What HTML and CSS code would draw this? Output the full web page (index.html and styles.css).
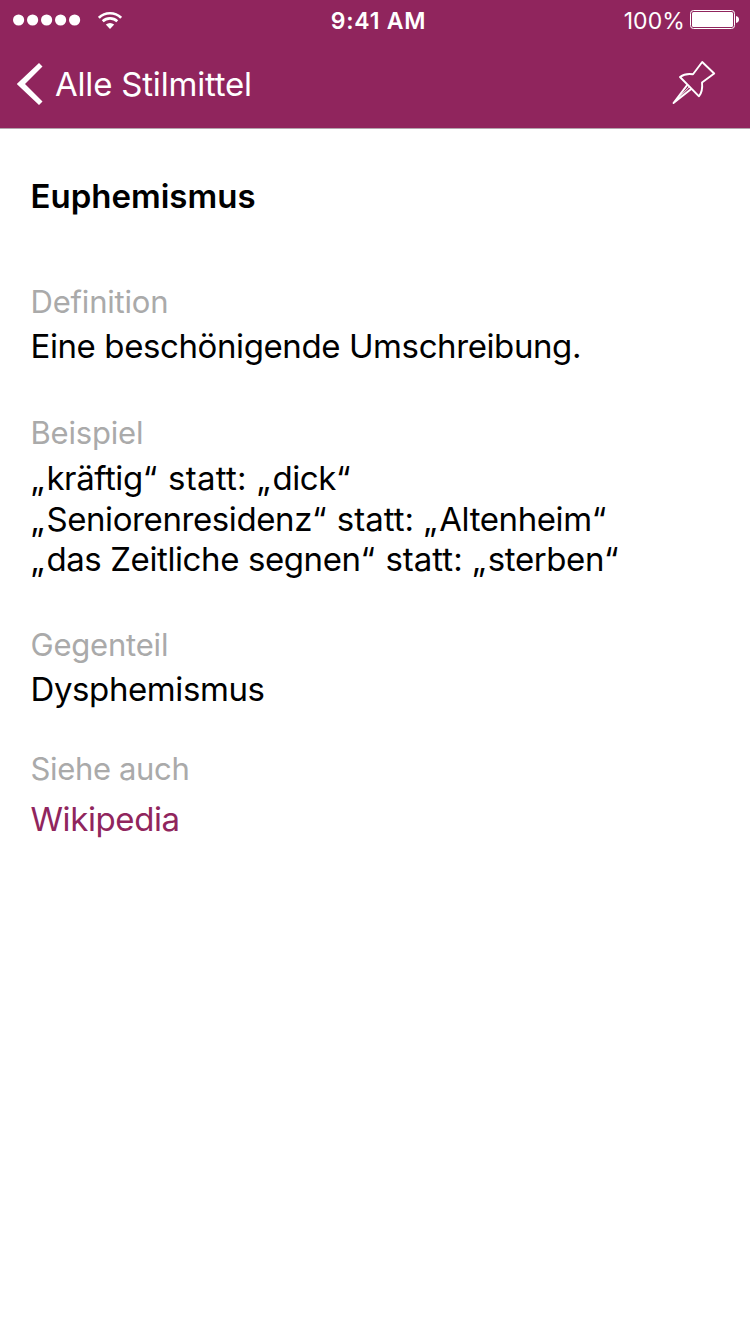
FILE: index.html
```html
<!DOCTYPE html>
<html lang="de">
<head>
<meta charset="utf-8">
<title>Euphemismus</title>
<link rel="stylesheet" href="styles.css">
</head>
<body>
<header class="header">
  <div class="status">
    <div class="signal">
      <svg class="dots" width="68" height="12" viewBox="0 0 68 12" fill="#fff"><circle cx="5.6" cy="6" r="5.6"/><circle cx="19.6" cy="6" r="5.6"/><circle cx="33.6" cy="6" r="5.6"/><circle cx="47.6" cy="6" r="5.6"/><circle cx="61.6" cy="6" r="5.6"/></svg>
      <svg class="wifi" width="24" height="18" viewBox="0 0 24 18" fill="none" stroke="#fff" stroke-width="2.6"><path d="M.9 6.8A15.700 15.700 0 0 1 23.100 6.800"/><path d="M4.700 10.300A10.600 10.600 0 0 1 19.300 10.300"/><path d="M7.800 13.600Q12 10.200 16.200 13.600L12 18z" fill="#fff" stroke="none"/></svg>
    </div>
    <span class="time">9:41 AM</span>
    <div class="power">
      <span class="percent">100%</span>
      <svg class="battery" width="49" height="20" viewBox="0 0 49 20"><rect x=".5" y=".5" width="44" height="18" rx="3" fill="none" stroke="#fff"/><rect x="2" y="2" width="41" height="15" rx="1.5" fill="#fff"/><path d="M46 6q3 .7 3 3.500t-3 3.500z" fill="#fff"/></svg>
    </div>
  </div>
  <nav class="nav">
    <a class="back"><svg width="26" height="42" viewBox="0 0 26 42" fill="#fff"><path d="M-.3 21L22 0l3.500 3.500L8 21l17.500 17.500L22 42z"/></svg><span class="back-label">Alle Stilmittel</span></a>
    <svg class="pin" width="44" height="44" viewBox="0 0 44 44" fill="none" stroke="#fff" stroke-width="1.900" stroke-linejoin="round"><path d="M30.200 2L42.200 13.500 30 22.500Q31 31 27 36.300L8 17Q13.500 13 21 14.300z"/><path d="M15.500 24.700L1.500 43l18-14.300"/><path d="M1.500 43l16-16.300" stroke-width="1"/></svg>
  </nav>
</header>
<main class="content">
  <h1 class="title">Euphemismus</h1>
  <section class="entry"><h2 class="label">Definition</h2><p class="text definition">Eine beschönigende Umschreibung.</p></section>
  <section class="entry sample"><h2 class="label">Beispiel</h2><p class="text example"><span class="line"><span class="open">„</span>kräftig<span class="close">“</span><span class="wide"> statt: </span><span class="open">„</span>dick<span class="close">“</span></span><span class="line"><span class="open">„</span>Seniorenresidenz<span class="close">“</span><span class="statt"> statt: </span><span class="open">„</span>Altenheim<span class="close">“</span></span><span class="line"><span class="open">„</span>das Zeitliche segnen<span class="close">“</span><span class="statt"> statt: </span><span class="open">„</span>sterben<span class="close">“</span></span></p></section>
  <section class="entry antonym"><h2 class="label">Gegenteil</h2><p class="text opposite">Dysphemismus</p></section>
  <section class="entry"><h2 class="label also">Siehe auch</h2><a class="text link">Wikipedia</a></section>
</main>
</body>
</html>
```
FILE: styles.css
```css
* { box-sizing: border-box; margin: 0; padding: 0; }
body { width: 750px; height: 1334px; background: #fff; color: #000; font-family: Inter, "Liberation Sans", sans-serif; overflow: hidden; }
.header { height: 129px; background: #90255d; color: #fff; border-bottom: 1px solid #b3a5ad; }
.status { height: 41px; display: grid; grid-template-columns: 1fr auto 1fr; align-items: center; padding: 0 11px 0 13px; }
.signal, .power, .back { display: flex; align-items: center; }
.dots { margin-top: -1px; }
.wifi { margin-left: 17px; margin-top: -1px; }
.time { font-size: 23px; font-weight: 600; letter-spacing: .8px; padding-left: 5px; }
.power { justify-content: flex-end; gap: 5px; }
.battery { margin-top: -1px; }
.percent { font-size: 23px; letter-spacing: .1px; }
.nav { height: 87px; display: flex; align-items: center; justify-content: space-between; padding: 0 34px 0 17px; }
.back { gap: 12px; margin-bottom: 2px; }
.back-label { font-size: 33px; letter-spacing: -.2px; }
.pin { margin-bottom: 5px; }
.content { padding: 42px 31px 0 30.5px; }
.title { font-size: 33px; line-height: 50px; font-weight: 600; white-space: nowrap; margin-bottom: 61px; }
.entry { margin-bottom: 46px; }
.label { font-size: 31px; line-height: 40px; font-weight: 400; color: #aaa; letter-spacing: -.2px; }
.also { letter-spacing: -.35px; }
.text { display: block; font-size: 33px; line-height: 41px; font-weight: 400; letter-spacing: -.4px; white-space: nowrap; }
.definition { padding-top: 4px; }
.sample { margin-bottom: 45.5px; }
.example { padding-top: 5px; line-height: 40.5px; }
.line { display: block; }
.open { letter-spacing: 2px; }
.close { letter-spacing: 1px; }
.statt { letter-spacing: 0; }
.wide { letter-spacing: .3px; }
.opposite { padding-top: 4px; }
.antonym { margin-bottom: 39px; }
.link { padding-top: 10px; color: #90255d; }
```
